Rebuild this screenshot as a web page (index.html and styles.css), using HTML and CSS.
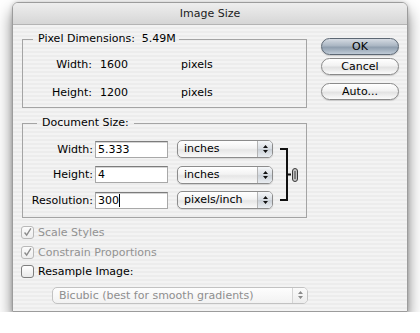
FILE: index.html
```html
<!DOCTYPE html>
<html>
<head>
  <meta charset='utf-8'>
  <title>Image Size</title>
  <link rel="stylesheet" href="styles.css">
</head>
<body>
  <div class="window">
    <div class="titlebar">Image Size</div>
    <div class="content">
      <div class="main">
        <fieldset class="group pixels">
          <legend>Pixel Dimensions:&nbsp; 5.49M</legend>
          <div class="pd-grid">
            <span class="lbl">Width:</span><span>1600</span><span>pixels</span>
            <span class="lbl">Height:</span><span>1200</span><span>pixels</span>
          </div>
        </fieldset>
        <fieldset class="group docsize">
          <legend>Document Size:</legend>
          <div class="ds-grid">
            <span class="lbl">Width:</span>
            <div class="field">5.333</div>
            <div class="popup"><span class="ptext">inches</span><span class="arrows"><svg width="7" height="10" viewBox="0 0 7 10"><path d="M1 4 L3.5 1 L6 4Z M1 6 L3.5 9 L6 6Z"/></svg></span></div>
            <svg class="bracket" width="27" height="69" viewBox="0 0 27 69">
              <path d="M6 9 H13 V60 H6 M13 34.5 H17" fill="none" stroke="#111" stroke-width="2"/>
              <rect x="18.5" y="28.5" width="5" height="13" rx="2.5" fill="#c4c4c4" stroke="#3a3a3a"/>
              <path d="M21 31 V39" stroke="#3a3a3a"/>
            </svg>
            <span class="lbl">Height:</span>
            <div class="field">4</div>
            <div class="popup"><span class="ptext">inches</span><span class="arrows"><svg width="7" height="10" viewBox="0 0 7 10"><path d="M1 4 L3.5 1 L6 4Z M1 6 L3.5 9 L6 6Z"/></svg></span></div>
            <span class="lbl">Resolution:</span>
            <div class="field">300<span class="caret"></span></div>
            <div class="popup"><span class="ptext">pixels/inch</span><span class="arrows"><svg width="7" height="10" viewBox="0 0 7 10"><path d="M1 4 L3.5 1 L6 4Z M1 6 L3.5 9 L6 6Z"/></svg></span></div>
          </div>
        </fieldset>
        <div class="checks">
          <div class="check disabled"><span class="box"><svg width="13" height="13" viewBox="0 0 13 13"><path d="M3 6.5 L5.5 9.5 L10.5 1.5" fill="none" stroke="#8c8c8c" stroke-width="1.6"/></svg></span>Scale Styles</div>
          <div class="check disabled"><span class="box"><svg width="13" height="13" viewBox="0 0 13 13"><path d="M3 6.5 L5.5 9.5 L10.5 1.5" fill="none" stroke="#8c8c8c" stroke-width="1.6"/></svg></span>Constrain Proportions</div>
          <div class="check"><span class="box"></span>Resample Image:</div>
        </div>
        <div class="popup wide disabled"><span class="ptext">Bicubic (best for smooth gradients)</span><span class="arrows"><svg width="7" height="10" viewBox="0 0 7 10"><path d="M1 4 L3.5 1 L6 4Z M1 6 L3.5 9 L6 6Z"/></svg></span></div>
      </div>
      <div class="buttons">
        <button class="btn default">OK</button>
        <button class="btn cancel">Cancel</button>
        <button class="btn auto">Auto...</button>
      </div>
    </div>
  </div>
</body>
</html>
```

FILE: styles.css
```css
*, *:before, *:after {
  box-sizing: border-box;
}
html, body {
  margin: 0;
  padding: 0;
  background: #fff;
  font-family: "DejaVu Sans", sans-serif;
  font-size: 11px;
  color: #000;
}
.window {
  width: 396px;
  height: 310px;
  margin: 2px 0 0 12px;
  border: 1px solid #9c9c9c;
  border-radius: 6px 6px 0 0;
  background: repeating-linear-gradient(to bottom, #ececec 0, #ececec 2px, #f3f3f3 2px, #f3f3f3 4px);
  box-shadow: 0 9px 16px rgba(0, 0, 0, .5), 0 0 4px rgba(0, 0, 0, .18);
  overflow: hidden;
}
.titlebar {
  height: 22px;
  line-height: 21px;
  text-align: center;
  color: #1c1c1c;
  background: linear-gradient(#eeeeee, #d6d6d6);
  border-bottom: 1px solid #b4b4b4;
}
.content {
  display: flex;
  padding: 7px 8px 0 9px;
}
.main {
  width: 285px;
}
.group {
  margin: 0;
  padding: 0;
  border: 1px solid #a4a4a4;
  min-width: 0;
}
.group legend {
  line-height: 14px;
  padding: 0 3px 0 5px;
  margin-left: 10px;
}
.docsize {
  margin-top: 8px;
}
.docsize legend {
  padding: 0 5px;
  margin-left: 14px;
}
.lbl {
  text-align: right;
}
.pd-grid {
  display: grid;
  grid-template-columns: 69px 73px auto;
  column-gap: 8px;
  grid-auto-rows: 28px;
  align-items: center;
  padding: 4px 0 1px;
}
.ds-grid {
  display: grid;
  grid-template-columns: 72px 82px 97px 27px;
  grid-auto-rows: 18px;
  row-gap: 7.5px;
  align-items: center;
  padding: 10px 0 8px;
}
.ds-grid .lbl {
  padding-right: 2px;
}
.field {
  width: 73px;
  height: 17px;
  line-height: 15px;
  padding-left: 2px;
  background: #fff;
  border: 1px solid #a8a8a8;
  border-top-color: #7c7c7c;
  box-shadow: inset 0 1px 0 #d4d4d4;
  display: flex;
  align-items: center;
}
.caret {
  display: inline-block;
  width: 1px;
  height: 13px;
  background: #000;
}
.popup {
  width: 96px;
  height: 18px;
  display: flex;
  align-items: stretch;
  border: 1px solid #8c8c8c;
  border-radius: 5px;
  background: linear-gradient(#ffffff, #f3f3f3 45%, #e6e6e6 55%, #fafafa);
  box-shadow: 0 1px 1px rgba(0, 0, 0, .12);
  overflow: hidden;
}
.ptext {
  flex: 1;
  padding-left: 6px;
  line-height: 16px;
  white-space: nowrap;
}
.arrows {
  width: 15px;
  display: flex;
  align-items: center;
  justify-content: center;
  border-left: 1px solid #b4b4b4;
  background: linear-gradient(#f4f6f8, #d7dce2 50%, #c9cfd6 51%, #e9edf1);
}
.arrows svg {
  fill: #111;
}
.bracket {
  grid-column: 4;
  grid-row: 1 / 4;
  align-self: start;
}
.checks {
  margin-top: 5px;
}
.check {
  height: 19.5px;
  display: flex;
  align-items: center;
  gap: 4px;
  margin-left: -1px;
}
.check .box {
  width: 13px;
  height: 13px;
  border: 1px solid #7e7e7e;
  border-radius: 3px;
  background: linear-gradient(#ffffff, #e9e9e9);
  display: flex;
  align-items: center;
  justify-content: center;
}
.check.disabled {
  color: #929292;
}
.check.disabled .box {
  border-color: #b8b8b8;
  background: linear-gradient(#fbfbfb, #eeeeee);
}
.popup.wide {
  width: 256px;
  height: 17px;
  margin: 5px 0 0 30px;
}
.popup.disabled {
  border-color: #c2c2c2;
  color: #8e8e8e;
  box-shadow: none;
  background: linear-gradient(#fdfdfd, #f2f2f2);
}
.popup.disabled .ptext {
  line-height: 15px;
}
.popup.disabled .arrows {
  border-left-color: #d4d4d4;
  background: linear-gradient(#fafafa, #ededed);
}
.popup.disabled .arrows svg {
  fill: #8a8a8a;
}
.buttons {
  width: 78px;
  margin-left: 14px;
  padding-top: 6px;
  display: flex;
  flex-direction: column;
}
.btn {
  height: 17px;
  padding: 0;
  font-family: inherit;
  font-size: 11px;
  color: #000;
  border: 1px solid #8a8a8a;
  border-radius: 9px;
  background: linear-gradient(#ffffff, #f2f2f2 45%, #e2e2e2 55%, #fbfbfb);
  box-shadow: 0 1px 1px rgba(0, 0, 0, .15);
}
.btn.default {
  border-color: #5c6773;
  background: linear-gradient(#d5dbe2, #aab6c3 45%, #8f9eae 55%, #bfcad6);
}
.btn.cancel {
  margin-top: 3px;
}
.btn.auto {
  margin-top: 8px;
}
```
